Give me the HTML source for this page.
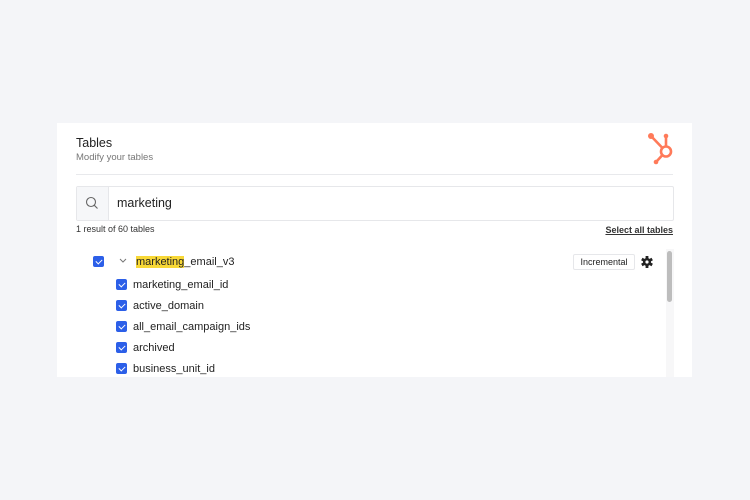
<!DOCTYPE html>
<html><head><style>
body{margin:0;width:750px;height:500px;background:#f4f5f8;font-family:"Liberation Sans",Arial,sans-serif;position:relative;overflow:hidden;color:#222}
.panel{position:absolute;left:57px;top:123px;width:635px;height:254px;background:#fff}
.abs{position:absolute}
.cb{position:absolute;width:11px;height:11px;background:#2c5fe8;border-radius:2px}
.cb:after{content:"";position:absolute;left:3.5px;top:1.5px;width:3px;height:5px;border:solid #fff;border-width:0 1.5px 1.5px 0;transform:rotate(45deg)}
.f{position:absolute;left:76px;font-size:11px;color:#222}
</style></head><body>
<div class="panel">
<div class="abs" style="left:19px;top:13px;font-size:12.5px;color:#222">Tables</div>
<div class="abs" style="left:19px;top:29px;font-size:9.5px;color:#777">Modify your tables</div>
<svg class="abs" style="left:583px;top:5px" width="40" height="40" viewBox="640 128 40 40">
<g stroke="#ff7a59" stroke-width="2.6" fill="none"><circle cx="666" cy="151.5" r="5"/><line x1="651" y1="136" x2="662" y2="147.5"/><line x1="666" y1="137" x2="666" y2="146"/><line x1="662" y1="155.5" x2="656.5" y2="161.5"/></g>
<g fill="#ff7a59"><circle cx="651" cy="136" r="3"/><circle cx="666" cy="136" r="2.3"/><circle cx="656" cy="162" r="2.3"/></g></svg>
<div class="abs" style="left:19px;top:51px;width:597px;height:1px;background:#e8e9ec"></div>
<div class="abs" style="left:19px;top:63px;width:596px;height:33px;border:1px solid #e6e7ea;border-radius:2px"></div>
<div class="abs" style="left:20px;top:64px;width:31px;height:33px;background:#f6f7f9;border-right:1px solid #e6e7ea"></div>
<svg class="abs" style="left:28px;top:73px" width="14" height="14" viewBox="0 0 14 14"><circle cx="6" cy="6" r="4.5" stroke="#666" stroke-width="1.1" fill="none"/><line x1="9.3" y1="9.3" x2="12.5" y2="12.5" stroke="#666" stroke-width="1.1"/></svg>
<div class="abs" style="left:60px;top:73px;font-size:12.5px;color:#222">marketing</div>
<div class="abs" style="left:19px;top:101px;font-size:9px;color:#333">1 result of 60 tables</div>
<div class="abs" style="right:19px;top:102px;font-size:9px;font-weight:bold;color:#333;text-decoration:underline">Select all tables</div>
<div class="cb" style="left:36px;top:133px"></div>
<svg class="abs" style="left:62px;top:135px" width="8" height="6"><polyline points="1,1 4,4 7,1" stroke="#777" fill="none" stroke-width="1"/></svg>
<div class="abs" style="left:79px;top:133px;font-size:11px"><span style="background:#f8d837">marketing</span>_email_v3</div>
<div class="abs" style="left:516px;top:131px;width:60px;height:14px;border:1px solid #e6e7ea;border-radius:2px;font-size:9px;line-height:14px;text-align:center;color:#222">Incremental</div>
<svg class="abs" style="left:584px;top:133px" width="12" height="12" viewBox="-6 -6 12 12">
<g fill="#222"><circle r="4"/><g id="t"><rect x="-1.4" y="-6" width="2.8" height="12"/></g><use href="#t" transform="rotate(60)"/><use href="#t" transform="rotate(120)"/></g><circle r="1.6" fill="#fff"/></svg>
<div class="abs" style="left:609px;top:126px;width:8px;height:128px;background:#f7f7f8"></div>
<div class="abs" style="left:610px;top:128px;width:5px;height:51px;background:#bdbdbd;border-radius:3px"></div>
<div class="cb" style="left:59px;top:156px"></div><div class="f" style="top:156px">marketing_email_id</div>
<div class="cb" style="left:59px;top:177px"></div><div class="f" style="top:177px">active_domain</div>
<div class="cb" style="left:59px;top:198px"></div><div class="f" style="top:198px">all_email_campaign_ids</div>
<div class="cb" style="left:59px;top:219px"></div><div class="f" style="top:219px">archived</div>
<div class="cb" style="left:59px;top:240px"></div><div class="f" style="top:240px">business_unit_id</div>
</div>
</body></html>
